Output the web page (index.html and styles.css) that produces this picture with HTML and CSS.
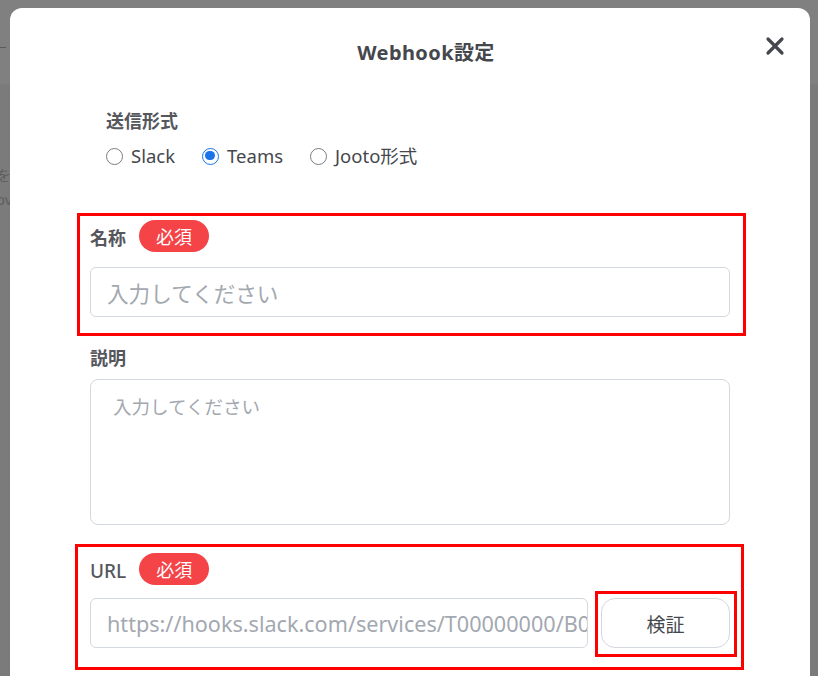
FILE: index.html
```html
<!DOCTYPE html>
<html lang="ja">
<head>
<meta charset="utf-8">
<link rel="stylesheet" href="styles.css">
</head>
<body>
<div class="backdrop">
  <div class="bg-top"><span class="bg-dash"></span></div>
  <div class="bg-text"><span>を</span><span>ov</span></div>
</div>
<div class="modal">
  <div class="modal-head">
    <h1 class="title">Webhook設定</h1>
    <button class="close" aria-label="閉じる">
      <svg width="20" height="20" viewBox="0 0 20 20"><path d="M3 3 L17 17 M17 3 L3 17" stroke="#45474d" stroke-width="3.2" stroke-linecap="round"/></svg>
    </button>
  </div>
  <div class="format">
    <div class="label">送信形式</div>
    <div class="radios">
      <label class="radio"><span class="dot"></span>Slack</label>
      <label class="radio"><span class="dot on"></span>Teams</label>
      <label class="radio"><span class="dot"></span>Jooto形式</label>
    </div>
  </div>
  <div class="field name-field">
    <div class="label-row"><span class="label">名称</span><span class="badge">必須</span></div>
    <div class="input">入力してください</div>
  </div>
  <div class="field desc-field">
    <div class="label-row"><span class="label">説明</span></div>
    <div class="textarea">入力してください</div>
  </div>
  <div class="field url-field">
    <div class="label-row"><span class="label plain">URL</span><span class="badge">必須</span></div>
    <div class="url-row">
      <div class="input url">https://hooks.slack.com/services/T00000000/B00000000/XXXXXXXXXXXXXXXXXXXXXXXX</div>
      <button class="verify">検証</button>
    </div>
  </div>
</div>
<div class="mark mark-name"></div>
<div class="mark mark-url"></div>
<div class="mark mark-btn"></div>
</body>
</html>
```
FILE: styles.css
```css
* { box-sizing: border-box; }
html, body { margin: 0; height: 100%; }
body {
  background: #7b7b7b;
  font-family: "Noto Sans", "Noto Sans CJK JP", sans-serif;
  overflow: hidden;
  position: relative;
}
.backdrop { position: absolute; inset: 0; }
.bg-top { height: 84px; background: #808080; position: relative; }
.bg-dash { position: absolute; left: 0; top: 47px; width: 6px; height: 1px; background: #5a5a5a; }
.bg-text { position: absolute; left: -4px; top: 163px; display: flex; flex-direction: column; font-size: 15px; color: #5f5f5f; line-height: 24px; }
.modal {
  position: absolute;
  left: 10px; top: 8px; width: 800px; height: 700px;
  background: #fff;
  border-radius: 12px;
  padding: 0 80px;
}
.modal-head { position: relative; height: 86px; display: flex; justify-content: center; align-items: flex-start; padding-left: 32px; }
.title { margin: 29px 0 0; font-size: 20px; font-weight: 700; color: #45474d; letter-spacing: 0.4px; }
.close { position: absolute; right: -57px; top: 26px; width: 24px; height: 24px; padding: 0; border: 0; background: none; display: flex; align-items: center; justify-content: center; }
.format { padding-left: 16px; }
.label { font-size: 18px; font-weight: 700; color: #55575d; line-height: 26px; }
.format .label { margin-top: 14px; }
.radios { display: flex; gap: 27px; margin-top: 9px; }
.radio { display: flex; align-items: center; font-size: 18.5px; color: #45474d; line-height: 26px; }
.dot { width: 17px; height: 17px; border: 1.6px solid #7a7d83; border-radius: 50%; margin-right: 8px; margin-left: 0; }
.dot.on { border: 1.6px solid #1a73e8; position: relative; }
.dot.on::after { content: ""; position: absolute; left: 2.2px; top: 2.2px; width: 9.4px; height: 9.4px; border-radius: 50%; background: #1a73e8; }
.name-field { margin-top: 51px; }
.label-row { display: flex; align-items: center; gap: 13px; height: 32px; }
.label-row .label { margin-top: 3px; }
.label.plain { font-weight: 500; font-size: 19px; color: #55575d; }
.badge { background: #f44448; color: #fff; font-size: 18px; border-radius: 16px; height: 32px; width: 70px; display: flex; align-items: center; justify-content: center; }
.input {
  margin-top: 15px;
  height: 50px;
  border: 1px solid #d3d7de;
  border-radius: 6px;
  padding: 0 16px;
  display: flex; align-items: center;
  font-size: 21.6px; color: #a3a8b0;
  white-space: nowrap; overflow: hidden;
}
.desc-field { margin-top: 26px; }
.desc-field .label-row { height: 26px; }
.textarea {
  margin-top: 10px;
  height: 146px;
  border: 1px solid #d3d7de;
  border-radius: 8px;
  padding: 13px 22px;
  font-size: 18.5px; color: #a3a8b0; line-height: 28px;
}
.url-field { margin-top: 28px; }
.url-row { display: flex; gap: 13px; margin-top: 13px; }
.url-row .input { margin-top: 0; flex: 1; min-width: 0; font-size: 21.6px; }
.verify {
  width: 129px; height: 50px;
  border: 1px solid #d3d7de;
  border-radius: 14px;
  background: #fff;
  font-family: "Noto Sans CJK JP", sans-serif;
  font-size: 19px; color: #45474d;
}
.mark { position: absolute; border: 3px solid #f00; pointer-events: none; }
.mark-name { left: 77px; top: 213px; width: 669px; height: 123px; }
.mark-url { left: 75px; top: 544px; width: 669px; height: 126px; }
.mark-btn { left: 595px; top: 591px; width: 142px; height: 66px; }
```
